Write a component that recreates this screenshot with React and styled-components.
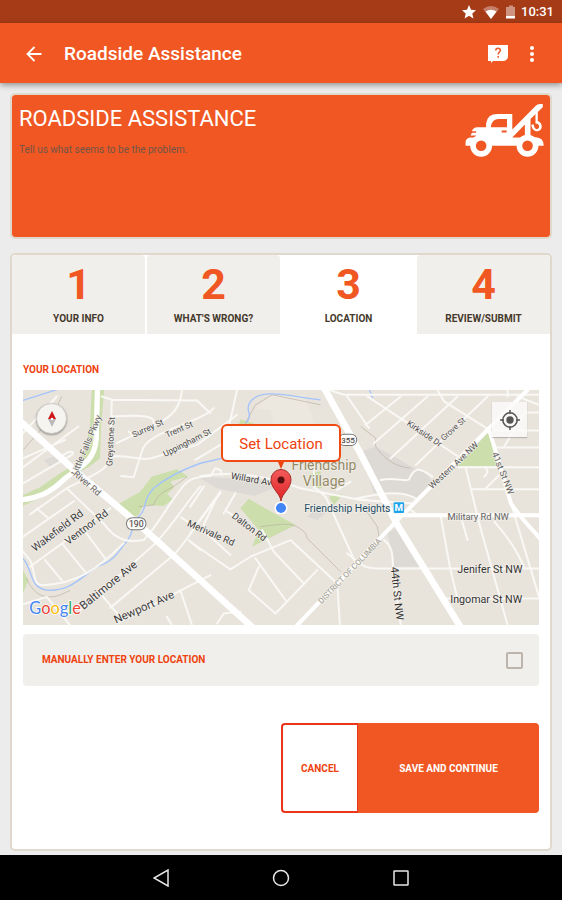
import React from 'react';
import styled, { createGlobalStyle } from 'styled-components';

const orange = '#f05722';
const deep = '#ee420f';
const tan = '#e0d9cb';
const stone = '#f1efeb';

const Global = createGlobalStyle`
  * { box-sizing: border-box; }
  body { margin: 0; font-family: Roboto, 'Liberation Sans', sans-serif; background: #ececec; }
  button { font-family: inherit; cursor: pointer; }
`;

const Page = styled.div`
  min-height: 100vh;
  display: flex;
  flex-direction: column;
`;

const StatusBar = styled.div`
  height: 23px;
  padding: 1px 8px 0;
  background: #a63b17;
  color: #fff;
  display: flex;
  align-items: center;
  justify-content: flex-end;
  font-size: 13px;
  line-height: 16px;
  font-weight: 500;
`;

const StatusIcons = styled.svg`
  width: 56px;
  height: 16px;
  margin-right: 4px;
`;

const AppBar = styled.header`
  position: relative;
  height: 60px;
  padding: 2px 8px 0 20px;
  background: ${orange};
  display: flex;
  align-items: center;
  box-shadow: 0 2px 6px rgba(0, 0, 0, 0.4);
  color: #fff;
`;

const IconButton = styled.button`
  border: 0;
  padding: 0;
  background: none;
  color: inherit;
  display: grid;
  place-items: center;
  width: ${(p) => p.$width}px;
  height: 40px;
`;

const AppTitle = styled.h1`
  margin: 0 0 0 16px;
  flex: 1;
  font-size: 19px;
  line-height: 26px;
  font-weight: 500;
  white-space: nowrap;
`;

const Content = styled.main`
  flex: 1;
  display: flex;
  flex-direction: column;
  gap: 14px;
  padding: 10px 10px 4px;
`;

const Hero = styled.section`
  min-height: 146px;
  border: 2px solid ${tan};
  border-radius: 5px;
  background: ${orange};
  background-clip: padding-box;
  display: flex;
  justify-content: space-between;
  align-items: flex-start;
  padding: 9px 6px 9px 7px;
`;

const HeroTitle = styled.h2`
  margin: 0;
  color: #fff;
  font-size: 22px;
  line-height: 30px;
  font-weight: 400;
`;

const HeroText = styled.p`
  margin: 8px 0 0;
  color: #705648;
  font-size: 10px;
  line-height: 16px;
`;

const TruckIcon = styled.svg`
  width: 79px;
  height: 53px;
`;

const Card = styled.section`
  flex: 1;
  border: 2px solid ${tan};
  border-radius: 5px;
  background: #fff;
`;

const Steps = styled.ol`
  list-style: none;
  margin: 0;
  padding: 0;
  display: grid;
  grid-template-columns: repeat(4, 1fr);
  gap: 2px;
`;

const Step = styled.li`
  height: 79px;
  padding-top: 5px;
  border-radius: 4px 4px 0 0;
  background: ${(p) => (p.$active ? '#fff' : stone)};
  color: #44392b;
  display: flex;
  flex-direction: column;
  align-items: center;
  font-size: 10px;
  line-height: 16px;
  font-weight: 700;
`;

const StepNumber = styled.strong`
  color: ${orange};
  font-size: 43px;
  line-height: 48px;
  font-weight: 700;
  margin-bottom: 3px;
`;

const Body = styled.div`
  padding: 28px 11px 36px;
`;

const Label = styled.h3`
  margin: 0 0 12px;
  color: ${deep};
  font-size: 10px;
  line-height: 16px;
  font-weight: 700;
`;

const MapBox = styled.div`
  position: relative;
  height: 235px;
  overflow: hidden;
  background: #e8e4dc;
`;

const MapSvg = styled.svg`
  display: block;
  width: 100%;
  height: 100%;
`;

const Compass = styled.button`
  position: absolute;
  left: 13px;
  top: 13px;
  width: 31px;
  height: 31px;
  padding: 0;
  border: 1px solid #d0cdc8;
  border-radius: 50%;
  background: #f5f4f1;
  box-shadow: 0 1px 2px rgba(0, 0, 0, 0.35);
  display: grid;
  place-items: center;
`;

const Locate = styled.button`
  position: absolute;
  right: 12px;
  top: 12px;
  width: 35px;
  height: 35px;
  padding: 0;
  border: 0;
  background: rgba(251, 250, 249, 0.85);
  box-shadow: 0 1px 1px rgba(0, 0, 0, 0.2);
  display: grid;
  place-items: center;
`;

const Callout = styled.div`
  position: absolute;
  left: 50%;
  top: 34px;
  transform: translateX(-50%);
  display: flex;
  flex-direction: column;
  align-items: center;
`;

const CalloutButton = styled.button`
  width: 120px;
  height: 38px;
  padding: 2px 0 0;
  border: 2px solid #f04a12;
  border-radius: 6px;
  background: #fff;
  color: ${deep};
  font-size: 15px;
  line-height: 20px;
`;

const Pin = styled.svg`
  width: 24px;
  height: 52px;
`;

const Manual = styled.label`
  margin-top: 9px;
  min-height: 52px;
  padding: 0 16px 0 19px;
  border-radius: 4px;
  background: ${stone};
  color: ${deep};
  display: flex;
  align-items: center;
  justify-content: space-between;
  font-size: 10px;
  line-height: 16px;
  font-weight: 700;
`;

const Checkbox = styled.input`
  appearance: none;
  width: 17px;
  height: 17px;
  margin: 0;
  border: 2px solid #bdb5ab;
  border-radius: 2px;
  &:checked { background: ${orange}; }
`;

const Actions = styled.div`
  margin-top: 37px;
  display: flex;
  justify-content: flex-end;
`;

const ActionButton = styled.button`
  width: ${(p) => (p.$primary ? 181 : 77)}px;
  height: 90px;
  padding: 2px 0 0;
  border: 2px solid ${(p) => (p.$primary ? orange : '#ea3518')};
  border-right-width: ${(p) => (p.$primary ? 2 : 1)}px;
  border-radius: ${(p) => (p.$primary ? '0 4px 4px 0' : '4px 0 0 4px')};
  background: ${(p) => (p.$primary ? orange : '#fff')};
  color: ${(p) => (p.$primary ? '#fff' : deep)};
  font-size: 10px;
  line-height: 16px;
  font-weight: 700;
`;

const NavBar = styled.nav`
  height: 45px;
  background: #000;
  color: #e8e8e8;
  display: flex;
  align-items: center;
  justify-content: center;
  gap: 80px;
`;

const Streets = styled.g`
  fill: none;
  stroke: #f9f8f5;
  stroke-width: ${(p) => p.$w};
  stroke-linejoin: round;
  stroke-linecap: round;
`;

const MapText = styled.text`
  font-size: ${(p) => p.$size}px;
  fill: ${(p) => p.$color || '#3c3c3c'};
  stroke: #f3f0eb;
  stroke-width: 4px;
  stroke-linejoin: round;
  paint-order: stroke;
  text-anchor: middle;
  dominant-baseline: central;
`;

const MetroText = styled.text`
  font-size: 29px;
  font-weight: 700;
  fill: #fff;
  text-anchor: middle;
`;

const Logo = styled.text`
  font-family: Lato, sans-serif;
  font-size: 49px;
  font-weight: 400;
  stroke: #fff;
  stroke-width: 4px;
  paint-order: stroke;
`;

// text, centre x, centre y, angle, size, colour
const labels = [
  ['Little Falls Pkwy', 229, 196, -67, 27, '#5d5d5d'],
  ['Greystone St', 301, 185, -87, 26, '#4a4a4a'],
  ['Surrey St', 412, 145, -24, 25, '#4a4a4a'],
  ['Trent St', 506, 148, -24, 25, '#4a4a4a'],
  ['Uppingham St', 530, 188, -27, 25, '#4a4a4a'],
  ['River Rd', 231, 310, 41, 27, '#666'],
  ['Wakefield Rd', 142, 452, -37, 32],
  ['Ventnor Rd', 229, 441, -37, 31],
  ['Baltimore Ave', 294, 614, -39, 34],
  ['Newport Ave', 401, 680, -24, 34],
  ['Merivale Rd', 602, 458, 24, 29],
  ['Willard Ave', 730, 298, 10, 28],
  ['Dalton Rd', 717, 440, 37, 28],
  ['Kirkside Dr', 1241, 161, 34, 25, '#4a4a4a'],
  ['Grove St', 1327, 148, -42, 24, '#555'],
  ['Western Ave NW', 1328, 256, -43, 26, '#555'],
  ['41st St NW', 1476, 280, 68, 27, '#666'],
  ['Military Rd NW', 1402, 410, 0, 28, '#666'],
  ['Jenifer St NW', 1437, 569, 0, 32, '#333'],
  ['Ingomar St NW', 1426, 657, 0, 32, '#333'],
  ['44th St NW', 1159, 640, 84, 32, '#333'],
  ['DISTRICT OF COLUMBIA', 1018, 573, -46, 24, '#a09e94'],
  ['Friendship', 940, 254, 0, 42, '#948a66'],
  ['Village', 940, 304, 0, 42, '#948a66'],
  ['Friendship Heights', 1010, 385, 0, 31, '#234c64'],
];

function CityMap() {
  return (
    <MapSvg viewBox="39 30 1545 705" preserveAspectRatio="xMidYMid slice" role="img" aria-label="Map of Friendship Village">
      <rect x="39" y="30" width="1545" height="705" fill="#e8e4dc" />
      <g fill="#cbdeab">
        <path d="M245 30H282L272 150 270 235 240 258 195 284 150 315 100 350 39 377V345L90 322 150 280 200 250 225 215 240 130Z" />
        <path d="M325 372L390 335 425 290 500 268 533 290 480 305 492 322 470 342 488 358 460 378 400 375 385 405 360 415Z" />
        <path d="M39 570L55 600 39 638Z" />
        <path d="M690 385L715 356 785 397 855 435 725 500 745 450ZM900 280L930 274 935 325 910 325ZM955 350L997 342 970 376ZM690 118L735 132 685 135Z" />
        <path d="M1435 155L1460 258H1340Z" />
      </g>
      <g fill="#dddad6">
        <path d="M1050 215L1095 200 1150 230 1210 265 1235 270 1265 305 1215 355 1150 340 1090 340Z" />
        <path d="M1130 460L1160 440 1235 560H1150L1140 500Z" />
        <path d="M560 290L750 300 800 320 730 348 620 325Z" />
        <path d="M890 410L915 385 945 400 920 420ZM102 240L130 230 150 245 120 260Z" />
      </g>
      <path d="M735 85L780 48 880 45 912 130 790 140 780 90Z" fill="#ece8df" />
      <g fill="none" stroke="#b9afa0" strokeWidth="2">
        <path d="M40 210L130 105 155 50M50 595C75 655 120 665 180 630M385 380L430 375C445 330 470 340 530 290" />
        <path d="M705 130L735 75 785 45 930 75M750 440C830 430 850 425 885 460L890 475 990 575" />
        <path d="M1050 140L1095 175V200C1130 250 1165 260 1200 265M1065 390L1100 440 1105 470" />
      </g>
      <g fill="none" stroke="#a5c3fb" strokeWidth="4">
        <path d="M39 62L145 28M680 225L570 250C500 275 460 300 430 325C390 370 415 385 385 410C360 445 370 470 340 495C310 540 290 550 260 560C215 590 180 635 110 630C55 620 70 570 39 535" />
        <path d="M930 60C850 52 760 25 725 60C695 90 735 105 705 130M1076 30L1086 55" />
      </g>
      <Streets $w={6}>
        <path d="M275 50L305 60 560 62M305 60L300 225C297 275 245 285 170 325L60 403M305 110C390 105 435 105 430 132M515 30C510 80 490 108 440 132L320 190M610 85C570 130 405 155 395 215L370 292 333 288" />
        <path d="M305 230C360 225 380 242 420 236L560 195 680 105M560 62L600 100M555 240L680 165M356 155L368 168" />
        <path d="M170 325L280 430C320 485 355 487 400 480C440 440 470 380 510 330C530 300 550 290 600 288" />
        <path d="M39 470L192 363M60 560L300 385M80 385L115 415M105 540L155 600M160 495L225 575M225 455L285 535M39 515L60 540C75 560 65 620 100 615C200 610 260 570 340 490" />
        <path d="M210 690L435 490C500 420 540 350 570 320M300 683L490 525C540 470 550 440 630 340M512 412L600 470 660 525M535 480L570 510" />
        <path d="M320 730L600 585M275 645L325 705M510 630L545 735M470 710L485 735M39 672L110 650 180 735M135 700L195 690M39 310L185 225C195 215 180 210 160 225M39 262L205 140M39 235L165 180M39 160L140 50" />
        <path d="M680 30L640 210M570 288C690 270 790 295 870 325L1050 360 1200 370M605 280L615 265 630 270 635 285" />
        <path d="M540 485L660 568 720 530 840 480 980 610 988 735M540 460L630 335M540 380L580 320M580 435L625 340M640 400L675 340M650 395L690 420M755 450L790 515 880 610M735 535L825 660M745 560L715 630 795 700 920 570M620 730L640 700 690 695" />
        <path d="M910 320L945 350 1040 560M910 220V325M1020 305L980 330M955 30L1000 45H1584M1010 50L1075 145" />
        <path d="M1070 50L1350 235M1170 50L1065 135M1250 50L1090 190M1340 50L1140 235M1430 50L1215 255M1280 30L1300 65 1435 150M1490 30V50M1455 203H1584M1340 262H1584M1385 328H1584M1450 152H1584M1540 98H1584M1480 200L1545 90M1425 325L1465 285M1422 262Q1438 275 1420 290M1520 50L1584 75" />
        <path d="M1365 265L1405 430 1490 735M1290 410L1318 565 1340 655M1350 410L1370 480M1450 425C1490 470 1520 510 1540 565M1500 370L1584 650M1010 520C1060 560 1060 565 1110 565H1584M1300 655H1584M1120 480C1150 500 1145 540 1147 570L1170 735" />
        <path d="M1040 355C1110 340 1170 330 1215 355M1110 300C1150 290 1190 308 1195 298C1210 262 1225 260 1265 290M1035 355L1070 360M1200 390L1220 405" />
      </Streets>
      <Streets $w={12}>
        <path d="M1550 30L1160 420 860 735M1160 406H1584M1435 150L1500 370C1540 430 1560 440 1590 480" stroke="#fff" />
      </Streets>
      <Streets $w={16}>
        <path d="M262 28L258 180C252 250 200 265 160 300C120 340 80 355 30 360" stroke="#fff" />
      </Streets>
      <Streets $w={20}>
        <path d="M28 122L200 277 380 428 570 600 730 745M938 20L1050 222 1160 435 1355 750" stroke="#fff" />
      </Streets>
      {labels.map(([text, x, y, angle, size, color]) => (
        <MapText key={text} x={x} y={y} $size={size} $color={color} transform={`rotate(${angle} ${x} ${y})`}>{text}</MapText>
      ))}
      <g fill="#fff" stroke="#777" strokeWidth="3">
        <rect x="349" y="413" width="58" height="36" rx="17" />
        <rect x="985" y="163" width="53" height="34" rx="16" />
      </g>
      <MapText x="378" y="432" $size={26}>190</MapText>
      <MapText x="1012" y="181" $size={24}>355</MapText>
      <rect x="1149" y="367" width="31" height="32" rx="3" fill="#1ba4ee" />
      <MetroText x="1164" y="393">M</MetroText>
      <Logo x="58" y="702">
        <tspan fill="#4285f4">G</tspan>
        <tspan fill="#ea4335">o</tspan>
        <tspan fill="#fbbc05">o</tspan>
        <tspan fill="#4285f4">g</tspan>
        <tspan fill="#34a853">l</tspan>
        <tspan fill="#ea4335">e</tspan>
      </Logo>
    </MapSvg>
  );
}

function TowTruck() {
  return (
    <TruckIcon viewBox="195 48 237 160" aria-hidden="true">
      <g fill="#fff">
        <path fillRule="evenodd" d="M258 118V106Q262 78 292 78H337V125L408 53Q413 48 420 48H429V58L392 93V148H408Q432 149 432 174H196V162Q197 151 210 149H228V143H211Q212 137 217 135H228V130H215Q219 118 232 118ZM272 118H321V93H294Q275 94 272 118ZM337 149H375V110ZM305 128V134H320V128Z" />
        <path d="M400 80L414 67V99Q427 104 426 118C424 133 400 136 395 116V110H402Q404 124 411 124Q419 123 418 114Q416 107 407 107V76Z" />
        <circle cx="243" cy="174" r="33" />
        <circle cx="383" cy="174" r="33" />
      </g>
      <g fill={orange}>
        <circle cx="243" cy="174" r="16" />
        <circle cx="383" cy="174" r="16" />
      </g>
    </TruckIcon>
  );
}

const steps = ['YOUR INFO', "WHAT'S WRONG?", 'LOCATION', 'REVIEW/SUBMIT'];

export default function App() {
  return (
    <Page>
      <Global />
      <StatusBar>
        <StatusIcons viewBox="0 0 56 16" aria-hidden="true">
          <path d="M8 1L10 5.7 15 6.2 11.3 9.5 12.4 14.4 8 11.8 3.6 14.4 4.7 9.5 1 6.2 6 5.7Z" fill="#fff" />
          <path d="M22 5Q30 -1 38 5L30 15Z" fill="#fff" opacity=".35" />
          <path d="M24.5 7.5Q30 4 35.5 7.5L30 15Z" fill="#fff" />
          <path d="M45 3H48V1.500H52V3H54V14H45Z" fill="#fff" opacity=".45" />
          <path d="M45 12H54V14.500H45Z" fill="#fff" />
        </StatusIcons>
        <span>10:31</span>
      </StatusBar>
      <AppBar>
        <IconButton $width={28} aria-label="Back">
          <svg width="16" height="16" viewBox="0 0 16 16" fill="none" stroke="currentColor" strokeWidth="1.800"><path d="M15.500 8H2M8.500 1L1.500 8L8.500 15" /></svg>
        </IconButton>
        <AppTitle>Roadside Assistance</AppTitle>
        <IconButton $width={24} aria-label="Help">
          <svg width="20" height="18" viewBox="0 0 20 18"><path d="M0 0H20V12Q19 16 15 16H5L3 18V16H0Z" fill="#fff" /><path d="M7.700 5.500Q7.900 3.300 10 3.300Q12.400 3.300 12.300 5.400C12.300 7 10.200 7.300 10.200 9.500M10.200 11V12.700" fill="none" stroke={orange} strokeWidth="1.500" /></svg>
        </IconButton>
        <IconButton $width={44} aria-label="More options">
          <svg width="4" height="16" viewBox="0 0 4 16" fill="currentColor"><circle cx="2" cy="2" r="2" /><circle cx="2" cy="8" r="2" /><circle cx="2" cy="14" r="2" /></svg>
        </IconButton>
      </AppBar>
      <Content>
        <Hero>
          <div>
            <HeroTitle>ROADSIDE ASSISTANCE</HeroTitle>
            <HeroText>Tell us what seems to be the problem.</HeroText>
          </div>
          <TowTruck />
        </Hero>
        <Card>
          <Steps>
            {steps.map((name, i) => (
              <Step key={name} $active={i === 2} aria-current={i === 2 ? 'step' : undefined}>
                <StepNumber>{i + 1}</StepNumber>
                {name}
              </Step>
            ))}
          </Steps>
          <Body>
            <Label>YOUR LOCATION</Label>
            <MapBox>
              <CityMap />
              <Compass aria-label="Compass">
                <svg width="8" height="16" viewBox="0 0 8 16"><path d="M4 0L8 8H0Z" fill="#cf1719" /><path d="M0 8H8L4 16Z" fill="#b9b9b9" /><circle cx="4" cy="8" r="1.300" fill="#fff" /></svg>
              </Compass>
              <Locate aria-label="Show my position">
                <svg width="20" height="20" viewBox="0 0 20 20" fill="none" stroke="#555" strokeWidth="1.500"><circle cx="10" cy="10" r="7.200" /><circle cx="10" cy="10" r="3.700" fill="#555" stroke="none" /><path d="M10 0V4M10 16V20M0 10H4M16 10H20" /></svg>
              </Locate>
              <Callout>
                <CalloutButton>Set Location</CalloutButton>
                <Pin viewBox="0 0 24 52" aria-hidden="true">
                  <defs><linearGradient id="pin" x2="0" y2="1"><stop stopColor="#f35b5b" /><stop offset="1" stopColor="#df2226" /></linearGradient></defs>
                  <path d="M9 0H15L12 7Z" fill={deep} />
                  <path d="M12 39C11 31 2 27 2 17.500A10 10 0 0 1 22 17.500C22 27 13 31 12 39Z" fill="url(#pin)" stroke="#a72b27" />
                  <circle cx="12" cy="18" r="3.500" fill="#590e10" />
                  <circle cx="12" cy="46" r="5.800" fill="#4285f4" stroke="#fff" strokeWidth="1.500" />
                </Pin>
              </Callout>
            </MapBox>
            <Manual>
              MANUALLY ENTER YOUR LOCATION
              <Checkbox type="checkbox" />
            </Manual>
            <Actions>
              <ActionButton>CANCEL</ActionButton>
              <ActionButton $primary>SAVE AND CONTINUE</ActionButton>
            </Actions>
          </Body>
        </Card>
      </Content>
      <NavBar>
        <IconButton $width={40} aria-label="System back"><svg width="16" height="18" viewBox="0 0 16 18" fill="none" stroke="currentColor" strokeWidth="1.500"><path d="M15 1V17L1 9Z" /></svg></IconButton>
        <IconButton $width={40} aria-label="Home"><svg width="18" height="18" viewBox="0 0 18 18" fill="none" stroke="currentColor" strokeWidth="1.500"><circle cx="9" cy="9" r="7.500" /></svg></IconButton>
        <IconButton $width={40} aria-label="Recent apps"><svg width="16" height="16" viewBox="0 0 16 16" fill="none" stroke="currentColor" strokeWidth="1.500"><rect x="1" y="1" width="14" height="14" rx=".5" /></svg></IconButton>
      </NavBar>
    </Page>
  );
}
